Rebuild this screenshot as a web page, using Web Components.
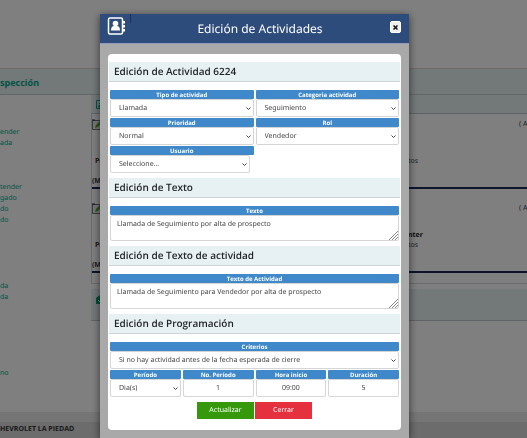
<!DOCTYPE html>
<html lang="es">
<head>
<meta charset="utf-8">
<meta name="viewport" content="width=device-width, initial-scale=1">
<title>Edición de Actividades</title>
<style>
    html, body{
        height: 100%;
    }
    body{
        margin: 0;
        overflow: hidden;
        font-family: "Noto Sans", "Open Sans", sans-serif;
        font-size: 7px;
        text-rendering: geometricPrecision;
        color: #444;
        --bg-primary-color: #2d4c7c;
        --bg-label-color: #3f89cb;
        --bg-band-color: #e7f0f3;
        --font-bold: "Open Sans", "Noto Sans", sans-serif;
    }
    .fields{
        display: grid;
        grid-template-columns: 1fr 1fr;
        gap: 1px 2px;
    }
    .fields.four{
        grid-template-columns: repeat(4, 1fr);
        margin-top: 1px;
    }
    .actions{
        display: flex;
        justify-content: center;
        gap: 1px;
        margin-top: 5px;
    }
</style>
</head>
<body>
<crm-page>
    <side-menu slot="menu"></side-menu>
    <activity-row amount="tos"></activity-row>
    <activity-row name="nter" amount="tos"></activity-row>
</crm-page>

<modal-window heading="Edición de Actividades">
    <form-section heading="Edición de Actividad 6224">
        <div class="fields">
            <form-field label="Tipo de actividad" type="select" value="Llamada"></form-field>
            <form-field label="Categoria actividad" type="select" value="Seguimiento"></form-field>
            <form-field label="Prioridad" type="select" value="Normal"></form-field>
            <form-field label="Rol" type="select" value="Vendedor"></form-field>
            <form-field label="Usuario" type="select" value="Seleccione..." class="short"></form-field>
        </div>
    </form-section>
    <form-section heading="Edición de Texto">
        <form-field label="Texto" type="textarea" value="Llamada de Seguimiento por alta de prospecto"></form-field>
    </form-section>
    <form-section heading="Edición de Texto de actividad">
        <form-field label="Texto de Actividad" type="textarea" value="Llamada de Seguimiento para Vendedor por alta de prospecto"></form-field>
    </form-section>
    <form-section heading="Edición de Programación">
        <form-field label="Criterios" type="select" value="Si no hay actividad antes de la fecha esperada de cierre"></form-field>
        <div class="fields four">
            <form-field label="Período" type="select" value="Dia(s)"></form-field>
            <form-field label="No. Período" type="text" value="1"></form-field>
            <form-field label="Hora inicio" type="text" value="09:00"></form-field>
            <form-field label="Duración" type="text" value="5"></form-field>
        </div>
        <div class="actions">
            <action-button>Actualizar</action-button>
            <action-button variant="danger">Cerrar</action-button>
        </div>
    </form-section>
</modal-window>

<script>
class BaseComponent extends HTMLElement {

    constructor(){
        super();
        this.attachShadow({ mode: "open" });
    }
    render(){
        const template = document.createElement("template");
        template.innerHTML = `${this.getStyle()}${this.getTemplate()}`;
        this.shadowRoot.replaceChildren(template.content);
    }
    connectedCallback(){
        this.render();
    }
    attr(name){
        return this.getAttribute(name) || "";
    }
}

class CrmPage extends BaseComponent {

    getStyle(){
        return `
        <style>
            :host{
                display: flex;
                flex-direction: column;
                height: 100%;
                background-color: white;
            }
            .top{
                flex: none;
                height: 68px;
            }
            h1{
                flex: none;
                margin: 0;
                height: 22px;
                line-height: 22px;
                padding-top: 3px;
                border-top: 1px solid #ded2d4;
                border-bottom: 1px solid #c3cdd0;
                background-color: var(--bg-band-color);
                font-size: 9px;
                color: #00a88a;
            }
            .columns{
                display: flex;
                flex: 1;
            }
            .menu{
                width: 91px;
            }
            .content{
                flex: 1;
            }
            .toolbar, .next{
                background-color: var(--bg-band-color);
                border-bottom: 1px solid #bcc9cc;
            }
            .toolbar{
                height: 18px;
                padding-left: 5px;
                display: flex;
                align-items: center;
            }
            .next{
                height: 25px;
                margin-top: 5px;
                padding: 6px 0 0 5px;
            }
            .list{
                border-left: 1px solid #ccd4e0;
                border-bottom: 1px solid #d3d3de;
                padding-bottom: 10px;
            }
            .strip{
                height: 10px;
                background-color: #ebebeb;
            }
            footer{
                height: 16px;
                line-height: 16px;
                background-color: #d8d8d8;
                color: #333;
                font-family: var(--font-bold);
                font-weight: bold;
                font-size: 7px;
            }
            svg{
                display: block;
            }
        </style>
        `;
    }
    getTemplate(){
        return `
        <div class="top"></div>
        <h1>spección</h1>
        <div class="columns">
            <div class="menu"><slot name="menu"></slot></div>
            <div class="content">
                <div class="toolbar">
                    <svg width="9" height="9" viewBox="0 0 9 9" fill="none" stroke="#00a88a"><path d="M.5.5h8v8h-8z"/><path d="M2 7c0-2 5-2 5 0zM3.500 3h2v1h-2z" fill="#00a88a"/></svg>
                </div>
                <div class="list"><slot></slot></div>
                <div class="next">
                    <svg width="9" height="9" viewBox="0 0 9 9"><path d="M0 3l4-3 5 3v6H0z" fill="#00a070"/><path d="M2 5l2 2 4-4" fill="none" stroke="#fff"/></svg>
                </div>
            </div>
        </div>
        <div class="strip"></div>
        <footer>HEVROLET LA PIEDAD</footer>`;
    }
}
customElements.define('crm-page', CrmPage);

class SideMenu extends BaseComponent {

    getStyle(){
        return `
        <style>
            :host{
                display: block;
                padding-top: 32px;
            }
            ul{
                list-style: none;
                margin: 0 0 33px;
                padding: 0;
            }
            ul.last{
                margin: 65px 0 0;
            }
            ul.middle{
                margin-bottom: 55px;
            }
            li{
                height: 11px;
                line-height: 11px;
            }
            a{
                color: #00a88a;
                text-decoration: none;
            }
        </style>
        `;
    }
    getList(items, name = ""){
        return `<ul class="${name}">${items.map((item) => `<li><a href="#">${item}</a></li>`).join("")}</ul>`;
    }
    getTemplate(){
        return `
        <nav>
            ${this.getList(["ender", "ada"])}
            ${this.getList(["tender", "gado", "do", "do"], "middle")}
            ${this.getList(["da", "da"])}
            ${this.getList(["no"], "last")}
        </nav>`;
    }
}
customElements.define('side-menu', SideMenu);

class ActivityRow extends BaseComponent {

    getStyle(){
        return `
        <style>
            :host{
                display: block;
                height: 68px;
                padding-top: 5px;
                border-bottom: 2px solid #1c2a55;
                margin-bottom: 9px;
                color: #333a4a;
                line-height: 12px;
            }
            :host(:last-of-type){
                margin-bottom: 0;
            }
            .line{
                display: grid;
                grid-template-columns: 1fr 111px 8px;
                white-space: nowrap;
            }
            .head{
                height: 27px;
            }
            .line.detail{
                height: 21px;
                align-items: end;
                line-height: 10px;
            }
            .detail b{
                padding-left: 3px;
            }
            .detail .name{
                padding: 0;
                color: #222;
            }
            .code{
                display: block;
                margin-top: 10px;
                line-height: 10px;
            }
        </style>
        `;
    }
    getTemplate(){
        return `
        <div class="line head">
            <svg width="10" height="12" viewBox="0 0 10 12"><path d="M.5 1.500h9v9h-9z" fill="#eee" stroke="#777"/><path d="M0 1h3" stroke="#223"/><path d="M3 9l1-3 4-4 2 2-4 4z" fill="#58a83a"/></svg>
            <span></span>
            <span>(&nbsp;A</span>
        </div>
        <div class="line detail">
            <b>Pr</b>
            <span>${this.attr("name") ? `<b class="name">${this.attr("name")}</b><br>` : ""}${this.attr("amount")}</span>
            <span></span>
        </div>
        <b class="code">(M</b>`;
    }
}
customElements.define('activity-row', ActivityRow);

class ModalWindow extends BaseComponent {

    getStyle(){
        return `
        <style>
            :host{
                display: flex;
                position: fixed;
                inset: 0;
                padding: 14px 118px 0 100px;
                background-color: rgba(0, 0, 0, .5);
            }
            .window{
                flex: 1;
                min-width: 0;
                background-color: #a9a9a9;
                box-shadow: 0 2px 8px rgba(0, 0, 0, .6);
            }
            header{
                display: grid;
                grid-template-columns: 24px 1fr 18px;
                align-items: start;
                height: 29px;
                padding: 0 2px 0 7px;
                border-bottom: 1px solid #8f9bbd;
                background-color: var(--bg-primary-color);
                color: white;
            }
            h2{
                margin: 0;
                font-size: 12px;
                line-height: 30px;
                font-weight: normal;
                text-align: center;
            }
            .icon{
                padding-top: 3px;
                border-right: 1px solid #1c3257;
                height: 6px;
            }
            .icon svg{
                display: block;
            }
            button{
                width: 11px;
                height: 12px;
                margin: 7px 0 0 1px;
                padding: 0;
                border: 1px solid #fff;
                border-radius: 2px;
                background-color: #eee;
                display: grid;
                place-items: center;
            }
            .panel{
                margin: 10px 8px;
                padding: 8px 1px 11px;
                border-radius: 4px;
                background-color: white;
            }
        </style>
        `;
    }
    getTemplate(){
        return `
        <div class="window" role="dialog" aria-label="${this.attr("heading")}">
            <header>
                <div class="icon">
                    <svg width="18" height="19" viewBox="0 0 18 19">
                        <rect x="1.500" y="1" width="14" height="16" rx="1.500" fill="none" stroke="#fff" stroke-width="1.500"/>
                        <path d="M16 4h2v2.500h-2zM16 8h2v2.500h-2zM16 12h2v2.500h-2z" fill="#fff"/>
                        <circle cx="8.500" cy="6.500" r="2.800" fill="#fff"/>
                        <path d="M4 13.500c0-3 1-4.500 3-4.500h3c2 0 3 1.500 3 4.500z" fill="#fff"/>
                    </svg>
                </div>
                <h2>${this.attr("heading")}</h2>
                <button type="button" aria-label="Cerrar ventana">
                    <svg width="5" height="5" viewBox="0 0 5 5"><path d="M.5.5l4 4M4.500.5l-4 4" stroke="#111" stroke-width="1.500"/></svg>
                </button>
            </header>
            <div class="panel"><slot></slot></div>
        </div>`;
    }
}
customElements.define('modal-window', ModalWindow);

class FormSection extends BaseComponent {

    getStyle(){
        return `
        <style>
            :host{
                display: block;
                margin-bottom: 5px;
            }
            :host(:last-of-type){
                margin-bottom: 0;
            }
            h3{
                margin: 0 0 8px;
                padding-left: 5px;
                height: 19px;
                line-height: 19px;
                font-family: var(--font-bold);
                font-size: 10px;
                font-weight: 600;
                color: #22262a;
                background-color: var(--bg-band-color);
                border-bottom: 1px solid #cdd5d8;
            }
            .body{
                padding: 0 1px;
            }
        </style>
        `;
    }
    getTemplate(){
        return `
        <h3>${this.attr("heading")}</h3>
        <div class="body"><slot></slot></div>`;
    }
}
customElements.define('form-section', FormSection);

class FormField extends BaseComponent {

    getStyle(){
        return `
        <style>
            :host{
                display: block;
                min-width: 0;
            }
            label{
                display: block;
                height: 9px;
                line-height: 10px;
                border-radius: 1px;
                background-color: var(--bg-label-color);
                color: white;
                font-family: var(--font-bold);
                font-size: 6px;
                font-weight: bold;
                text-align: center;
            }
            .control{
                position: relative;
            }
            :host(.short) .control{
                margin-right: 4px;
            }
            select, input, textarea{
                display: block;
                box-sizing: border-box;
                width: 100%;
                height: 18px;
                margin: 0;
                padding: 0 8px;
                border: 1px solid #d5d5d5;
                border-radius: 2px;
                background-color: white;
                color: inherit;
                font: inherit;
                text-rendering: inherit;
                outline: none;
            }
            select{
                appearance: none;
            }
            input{
                text-align: center;
            }
            textarea{
                height: 26px;
                padding: 3px 6px;
                line-height: 11px;
                resize: none;
                overflow: hidden;
            }
            svg{
                position: absolute;
                right: 3px;
                top: 8px;
                pointer-events: none;
            }
            svg.grip{
                right: 1px;
                top: auto;
                bottom: 1px;
            }
        </style>
        `;
    }
    getControl(){
        const value = this.attr("value");

        switch (this.attr("type")) {
            case 'select':
                return `<select id="control"><option>${value}</option></select>
                <svg width="5" height="4" viewBox="0 0 5 4"><path d="M.5.5l2 2 2-2" fill="none" stroke="#444"/></svg>`;
            case 'textarea':
                return `<textarea id="control">${value}</textarea>
                <svg class="grip" width="9" height="9" viewBox="0 0 9 9"><path d="M0 9l9-9M3 9l6-6M6 9l3-3" stroke="#888"/></svg>`;
            default:
                return `<input id="control" type="text" value="${value}">`;
        }
    }
    getTemplate(){
        return `
        <label for="control">${this.attr("label")}</label>
        <div class="control">${this.getControl()}</div>`;
    }
}
customElements.define('form-field', FormField);

class ActionButton extends BaseComponent {

    getStyle(){
        return `
        <style>
            :host{
                display: block;
            }
            button{
                display: block;
                width: 57px;
                height: 17px;
                padding: 0;
                border: 0;
                background-color: #36990b;
                color: white;
                font: inherit;
                text-rendering: inherit;
            }
            :host([variant="danger"]) button{
                background-color: #e5313d;
            }
        </style>
        `;
    }
    getTemplate(){
        return `<button type="button"><slot></slot></button>`;
    }
}
customElements.define('action-button', ActionButton);
</script>
</body>
</html>
